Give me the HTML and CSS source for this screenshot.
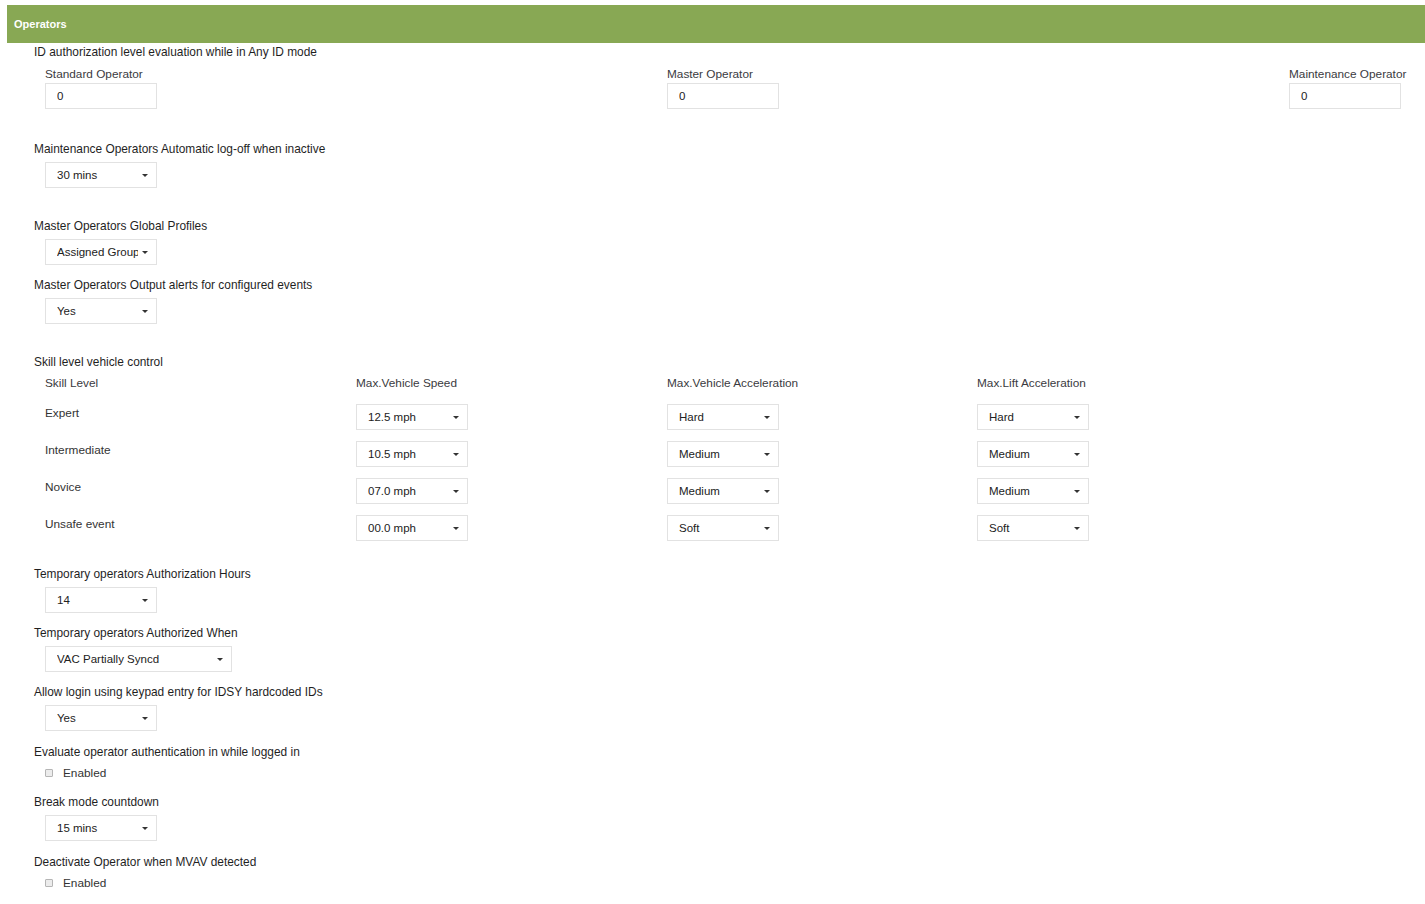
FILE: index.html
```html
<!DOCTYPE html>
<html lang="en">
<head>
    <meta charset="UTF-8">
    <meta name="viewport" content="width=device-width, initial-scale=1.0">
    <title>Operators</title>
    <link rel="stylesheet" href="styles.css">
</head>
<body>
    <div class="panel">
        <div class="panel-heading">Operators</div>

        <div class="panel-body">
            <!-- ID authorization -->
            <div class="group group-top">
                <div class="group-title">ID authorization level evaluation while in Any ID mode</div>
                <div class="op-row">
                    <div class="op-col">
                        <label class="sub-label">Standard Operator</label>
                        <input type="text" class="text-input" value="0">
                    </div>
                    <div class="op-col">
                        <label class="sub-label">Master Operator</label>
                        <input type="text" class="text-input" value="0">
                    </div>
                    <div class="op-col">
                        <label class="sub-label">Maintenance Operator</label>
                        <input type="text" class="text-input" value="0">
                    </div>
                </div>
            </div>

            <div class="group group-spaced">
                <div class="group-title">Maintenance Operators Automatic log-off when inactive</div>
                <div class="group-body">
                    <div class="select-wrap"><select class="select"><option>30 mins</option></select></div>
                </div>
            </div>

            <div class="group">
                <div class="group-title">Master Operators Global Profiles</div>
                <div class="group-body">
                    <div class="select-wrap"><select class="select"><option>Assigned Groups</option></select></div>
                </div>
            </div>

            <div class="group group-spaced">
                <div class="group-title">Master Operators Output alerts for configured events</div>
                <div class="group-body">
                    <div class="select-wrap"><select class="select"><option>Yes</option></select></div>
                </div>
            </div>

            <!-- Skill level -->
            <div class="group group-skill">
                <div class="group-title">Skill level vehicle control</div>
                <div class="skill-grid">
                    <div class="sub-label">Skill Level</div>
                    <div class="sub-label">Max.Vehicle Speed</div>
                    <div class="sub-label">Max.Vehicle Acceleration</div>
                    <div class="sub-label">Max.Lift Acceleration</div>

                    <div class="row-label">Expert</div>
                    <div class="select-wrap"><select class="select"><option>12.5 mph</option></select></div>
                    <div class="select-wrap"><select class="select"><option>Hard</option></select></div>
                    <div class="select-wrap"><select class="select"><option>Hard</option></select></div>

                    <div class="row-label">Intermediate</div>
                    <div class="select-wrap"><select class="select"><option>10.5 mph</option></select></div>
                    <div class="select-wrap"><select class="select"><option>Medium</option></select></div>
                    <div class="select-wrap"><select class="select"><option>Medium</option></select></div>

                    <div class="row-label">Novice</div>
                    <div class="select-wrap"><select class="select"><option>07.0 mph</option></select></div>
                    <div class="select-wrap"><select class="select"><option>Medium</option></select></div>
                    <div class="select-wrap"><select class="select"><option>Medium</option></select></div>

                    <div class="row-label">Unsafe event</div>
                    <div class="select-wrap"><select class="select"><option>00.0 mph</option></select></div>
                    <div class="select-wrap"><select class="select"><option>Soft</option></select></div>
                    <div class="select-wrap"><select class="select"><option>Soft</option></select></div>
                </div>
            </div>

            <div class="group">
                <div class="group-title">Temporary operators Authorization Hours</div>
                <div class="group-body">
                    <div class="select-wrap"><select class="select"><option>14</option></select></div>
                </div>
            </div>

            <div class="group">
                <div class="group-title">Temporary operators Authorized When</div>
                <div class="group-body">
                    <div class="select-wrap select-wide"><select class="select"><option>VAC Partially Syncd</option></select></div>
                </div>
            </div>

            <div class="group">
                <div class="group-title">Allow login using keypad entry for IDSY hardcoded IDs</div>
                <div class="group-body">
                    <div class="select-wrap"><select class="select"><option>Yes</option></select></div>
                </div>
            </div>

            <div class="group group-check">
                <div class="group-title">Evaluate operator authentication in while logged in</div>
                <div class="group-body">
                    <label class="check-row"><input type="checkbox" class="check"> Enabled</label>
                </div>
            </div>

            <div class="group">
                <div class="group-title">Break mode countdown</div>
                <div class="group-body">
                    <div class="select-wrap"><select class="select"><option>15 mins</option></select></div>
                </div>
            </div>

            <div class="group group-check">
                <div class="group-title">Deactivate Operator when MVAV detected</div>
                <div class="group-body">
                    <label class="check-row"><input type="checkbox" class="check"> Enabled</label>
                </div>
            </div>
        </div>
    </div>
</body>
</html>
```

FILE: styles.css
```css
* {
    margin: 0;
    padding: 0;
    box-sizing: border-box;
}

html, body {
    overflow: hidden;
}

body {
    font-family: 'Liberation Sans', Arial, sans-serif;
    font-size: 11.9px;
    color: #333;
    background: #fff;
}

/* panel */
.panel {
    margin: 5px 0 0 7px;
}

.panel-heading {
    height: 38px;
    line-height: 38px;
    padding-left: 7px;
    background: #88a854;
    color: #fff;
    font-size: 11px;
    font-weight: bold;
}

.panel-body {
    padding: 1px 0 0 27px;
}

/* groups */
.group {
    margin-bottom: 12px;
}

.group-top {
    margin-bottom: 32px;
}

.group-spaced {
    margin-bottom: 30px;
}

.group-skill {
    margin-bottom: 25px;
}

.group-check {
    padding-top: 1px;
    margin-bottom: 13px;
}

.group-title {
    line-height: 16px;
    color: #1f1f1f;
}

.group-body {
    margin-top: 5px;
    padding-left: 11px;
}

.sub-label {
    display: block;
    line-height: 16px;
    color: #3a3a40;
    font-size: 11.8px;
}

/* top operator row */
.op-row {
    display: flex;
    margin-top: 6px;
    padding-left: 11px;
}

.op-col {
    flex: 0 0 622px;
}

.op-col:last-child {
    flex: 0 0 auto;
}

.op-col .sub-label {
    margin-bottom: 1px;
}

.text-input {
    display: block;
    width: 112px;
    height: 26px;
    padding: 0 11px;
    border: 1px solid #e2e2e2;
    font-family: inherit;
    font-size: 11.5px;
    color: #222;
    outline: none;
}

/* selects */
.select-wrap {
    position: relative;
    width: 112px;
}

.select-wide {
    width: 187px;
}

.select-wrap::after {
    content: '';
    position: absolute;
    right: 9px;
    top: 12px;
    border-top: 3px solid #333;
    border-left: 3px solid transparent;
    border-right: 3px solid transparent;
    pointer-events: none;
}

.select {
    display: block;
    width: 100%;
    height: 26px;
    padding: 0 18px 0 11px;
    border: 1px solid #e2e2e2;
    border-radius: 0;
    background: #fff;
    font-family: inherit;
    font-size: 11.5px;
    color: #222;
    appearance: none;
    -webkit-appearance: none;
    outline: none;
}

/* skill grid */
.skill-grid {
    display: grid;
    grid-template-columns: 311px 311px 310px 112px;
    row-gap: 11px;
    margin-top: 5px;
    padding-left: 11px;
}

.skill-grid .sub-label {
    margin-bottom: 2px;
}

.row-label {
    padding-top: 1px;
    line-height: 16px;
    font-size: 11.8px;
    color: #333;
}

/* checkbox */
.check-row {
    display: flex;
    align-items: center;
    height: 16px;
    font-size: 11.8px;
    color: #333;
}

.check {
    appearance: none;
    -webkit-appearance: none;
    width: 8px;
    height: 8px;
    margin-right: 10px;
    border: 1px solid #b5b5b5;
    border-radius: 1px;
    background: #ececec;
}
```
